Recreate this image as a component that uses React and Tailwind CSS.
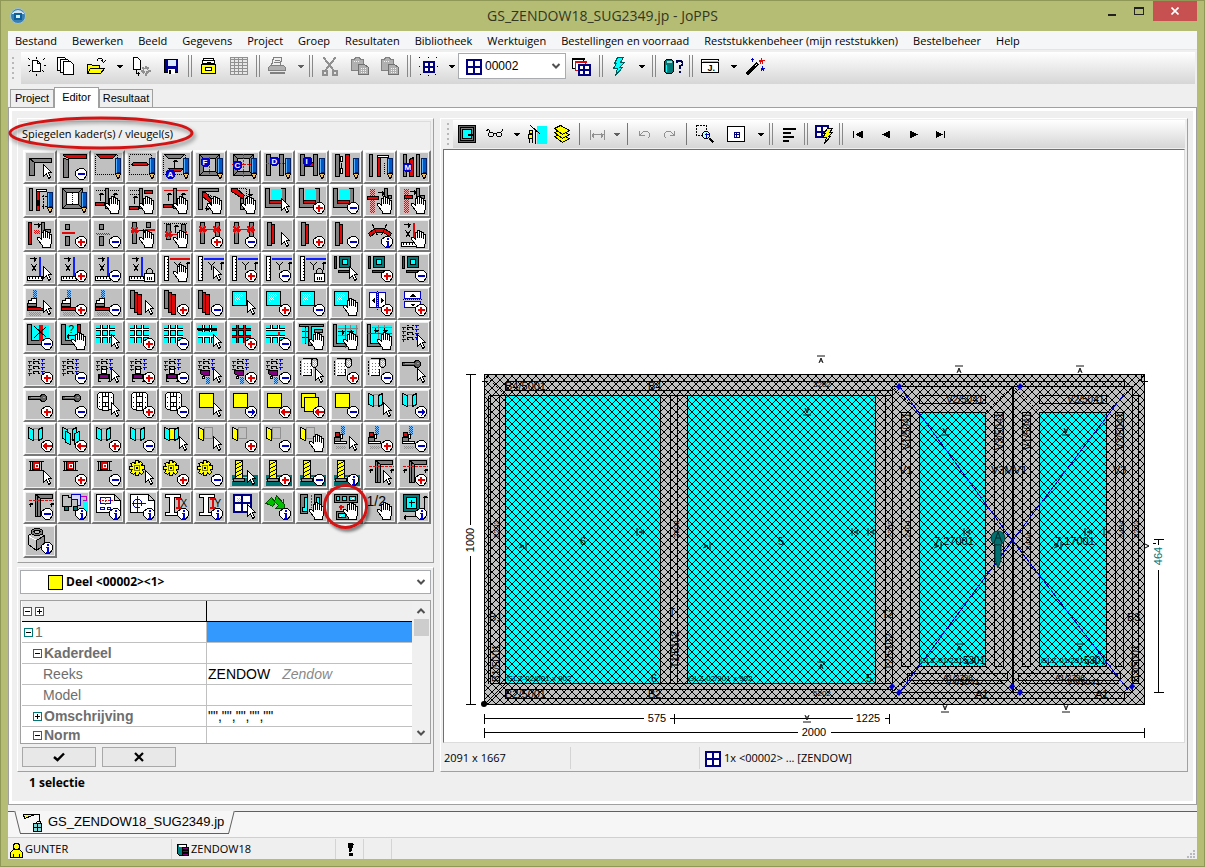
import React from 'react';

const K = '#000';
const W = '#fff';
const G = '#808080';
const R = '#e00808';
const C = '#00ffff';
const T = '#007878';
const B = '#0000c8';
const Y = '#ffff00';
const D = '#909090';

// Shape helpers: f = filled + outline, n = fill only, l = line, t = text
const f = (fill, d, stroke = K) => ({ fill, stroke, d });
const n = (fill, d) => ({ fill, stroke: 'none', d });
const l = (stroke, d, w = 1, dash) => ({ fill: 'none', stroke, d, w, dash });
const t = (fill, x, y, text, size = 10, weight = 'bold') => ({ fill, x, y, text, size, weight });

const Shapes = ({ list }) => (
  <g transform="translate(.5 .5)">
    {list.map((s, i) =>
      s.text ? (
        <text key={i} x={s.x} y={s.y} fill={s.fill} fontSize={s.size} fontWeight={s.weight} fontFamily="Liberation Sans, sans-serif">
          {s.text}
        </text>
      ) : (
        <path key={i} d={s.d} fill={s.fill} stroke={s.stroke} strokeWidth={s.w || 1} strokeDasharray={s.dash} shapeRendering="crispEdges" />
      )
    )}
  </g>
);

const Glyph = ({ list, size = 20, className = '' }) => (
  <svg viewBox={`0 0 ${size} ${size}`} width={size} height={size} className={`shrink-0 ${className}`} aria-hidden="true">
    <Shapes list={list} />
  </svg>
);

// Checkered fill as short runs of dots
const checker = (color, x, y, w, h) => {
  let d = '';
  for (let r = 0; r < h; r++) {
    for (let c = r % 2; c < w; c += 2) d += `M${x + c} ${y + r}h1v1h-1z`;
  }
  return n(color, d);
};

// Overlays in the lower right corner of a tool
const disc = f(W, 'M19 15H23L26 18V22L23 26H19L15 22V18Z');
const letterDisc = (x, y, c) => [
  n(B, `M${x - 2} ${y - 4}H${x + 3}L${x + 5} ${y - 2}V${y + 3}L${x + 3} ${y + 5}H${x - 2}L${x - 4} ${y + 3}V${y - 2}Z`),
  t(W, x - (c === 'I' ? 1 : 2), y + 3, c, 8),
];
const TOOLS = {
  cursor: [f(W, 'M17 11V23L20 20L22 25L24 24L22 19H25Z')],
  hand: [
    f(W, 'M16 26V24L11 18V16H13L15 18V11H17V9H19V10H21V11H23V13H25V21L24 24V26Z'),
    l(K, 'M17 11V16M19 10V16M21 11V16M23 13V17'),
  ],
  plus: [disc, l('#e00000', 'M17 20.5H24M20.5 17V24', 2)],
  minus: [disc, l(B, 'M17 20.5H24', 2)],
  right: [disc, l(B, 'M17 20.5H24', 2), n(B, 'M21 17L25 20.5L21 24Z')],
  left: [disc, l('#e00000', 'M18 20.5H25', 2), n('#e00000', 'M20 17L16 20.5L20 24Z')],
  info: [disc, n('#0000e0', 'M20 16H22V18H20ZM19 19H22V24H23V25H19V24H20V20H19Z')],
  pencil: [
    f('#0058c8', 'M21 5H26V19H21Z', '#002060'),
    l('#58b0ff', 'M22 5V19'),
    f('#f0c060', 'M21 20H26L24 25H23Z'),
    n(K, 'M22 23H26L24 26Z'),
  ],
  lock: [f(W, 'M16 18H26V26H16Z'), l(K, 'M18 18V15L20 13H22L24 15V18M19 21V24M21 21V24M23 21V24')],
};

const frameL = [f(G, 'M3 5H25V9H8V22H3Z'), l(K, 'M3 5L8 9')];
const redL = [f(G, 'M3 5L8 6V24H3Z'), f(R, 'M3 1H26V5H8L3 2Z')];
const dotBox = l(K, 'M1 1H23V21H1Z', 1, '1 1');
const postPair = [f(G, 'M2 1H6V22H2Z'), f(G, 'M15 1H19V22H15Z')];
const squareFrame = [f(G, 'M3 1H23V22H3Z'), f('#c0c0c0', 'M7 5H19V18H7Z'), l(K, 'M3 1L7 5M23 1L19 5M3 22L7 18M23 22L19 18')];
const up = (x, y) => l(K, `M${x} ${y}V${y + 8}M${x - 2} ${y + 2}H${x + 3}M${x - 1} ${y + 1}H${x + 2}`);
const toRight = (x, y) => l(K, `M${x} ${y}H${x + 7}M${x + 5} ${y - 2}V${y + 3}M${x + 6} ${y - 1}V${y + 2}`);
const cross = (x, y) => l(R, `M${x - 3} ${y - 3}L${x + 3} ${y + 3}M${x + 3} ${y - 3}L${x - 3} ${y + 3}M${x - 4} ${y}H${x + 4}`, 2);
const glazed = [
  f(G, 'M1 1H5V16H17V1H21V20H1Z'),
  n(C, 'M6 1H17V12H6Z'),
  f(R, 'M5 13H17V16H5Z'),
];
const hatchPost = [n('#f0b0b0', 'M3 1H8V25H3Z'), checker(R, 3, 1, 5, 24)];
const splitPost = [f(G, 'M5 3H9V8H5Z'), f(G, 'M5 15H9V24H5Z')];
const twinRed = [f(G, 'M4 1H8V22H4Z'), f(G, 'M19 1H23V22H19Z'), l(R, 'M5 8H22'), cross(6, 8), cross(20, 8)];
const redBar = [f(G, 'M3 1H7V24H3Z'), f(R, 'M7 3H10V22H7Z')];
const ruler = [f(W, 'M1 21H16V25H1Z'), l(K, 'M3 21V23M6 21V23M9 21V23M12 21V23M15 21V23')];
const rulerX = [toRight(3, 3), l(K, 'M5 9L10 16M10 9L5 16'), ...ruler, l('#1020ff', 'M13.5 1V20', 2)];
const rulerY = (c) => [
  f(W, 'M2 1H6V25H2Z'),
  l(K, 'M4 4H6M4 7H6M4 10H6M4 13H6M4 16H6M4 19H6M4 22H6'),
  l(c, 'M7 3.5H27', 2),
  l(K, 'M12 7L15 10L18 7M15 10V14'),
  up(25, 6),
];
const sash = [
  f(R, 'M2 1H4V13H2Z'),
  f(T, 'M7 1H18V12H7Z'),
  f(C, 'M10 4H15V9H10Z'),
  f(R, 'M6 15H18V17H6Z'),
];
const clamp = [
  n('#80c0ff', 'M6 0H10V11H6Z'),
  checker('#0050e0', 6, 0, 4, 11),
  f(W, 'M2 11H5V9H10V14H2Z'),
  f(G, 'M1 14H10V17H1Z'),
  f(R, 'M1 18H10L19 19V21H1Z'),
  checker(D, 2, 22, 12, 4),
];
const leaves = [f(G, 'M2 1H6V19H2Z'), f(R, 'M6 3H9V23H6Z'), f(R, 'M9 5H13V25H9Z')];
const pane = [f(C, 'M2 2H16V16H2Z'), checker(W, 4, 4, 8, 3), checker(W, 4, 7, 5, 3), checker(W, 4, 10, 2, 2)];
const doorsV = [f(W, 'M3 3H10V18H3Z', B), f(W, 'M12 3H19V18H12Z', B), l(K, 'M11 1V20', 1, '1 1'), n(K, 'M8 8V14L5 11ZM14 8V14L17 11Z')];
const doorsH = [f(W, 'M4 2H20V9H4Z', B), f(W, 'M4 12H20V18H4Z', B), l(K, 'M2 10H22', 1, '1 1'), n(K, 'M9 7H15L12 4ZM9 14H15L12 17Z')];
const tiles = (v, redRow) => [
  n(C, 'M1 1H20V19H1Z'),
  l(K, 'M1 6H20M1 13H20M7 1V19M14 1V19', 3),
  l(redRow || W, 'M1 6H20M1 13H20'),
  l(v, 'M7 1V19M14 1V19'),
];
const springs = [
  l('#0000ff', 'M1 4H5M1 8H5M1 12H5M1 16H5M14 2H18M14 6H18M14 10H18M14 14H18'),
  l('#0000ff', 'M3 3V6M3 7V10M3 11V14M3 15V18M16 1V4M16 5V8M16 9V12M16 13V16'),
  l(K, 'M6 2H8M11 2H13M7 4H12M6 6H8M11 6H13M7 9H12M6 11H8M11 11H13M7 14H12M6 16H8M11 16H13'),
  l(K, 'M7 3V6M12 3V6M7 8V11M12 8V11M7 13V16M12 13V16'),
];
const springBox = [...springs, n('#c0c0c0', 'M0 13H20V20H0Z'), f(W, 'M7 12H12V16H7Z'), f('#800080', 'M5 17H14V21H5Z'), l(K, 'M4 16V24M15 16V24M3 24H6M13 24H16')];
const springDrip = [...springs, n('#c0c0c0', 'M0 12H20V20H0Z'), f('#800080', 'M4 13H13V18H7L4 16Z'), n('#80c0ff', 'M9 19H13V26H9Z'), checker('#0050e0', 9, 19, 4, 7), f(W, 'M6 19H8V21H6Z')];
const roll = [
  n(W, 'M3 2H14V18H3Z'),
  l(K, 'M2 3V17', 1, '2 1'),
  l(K, 'M4 1H15M4 18H13M13 11V17'),
  l('#707070', 'M5 6H12M5 9H12M5 12H12M5 15H12', 1, '1 2'),
  f('#b0b0b0', 'M14 1H18L19 3V8L17 10H15L13 8V3Z'),
  checker(W, 14, 3, 4, 5),
];
const lever = [f('#606060', 'M2 5H14L15 3H18L20 5V8L18 10H15L14 8H2Z'), l('#a0a0a0', 'M4 6H13M16 6H18')];
const hinge = [f(W, 'M3 3L5 1H8V18H5L3 16Z'), f(W, 'M14 1H17L19 3V16L17 18H14Z'), f(W, 'M8 1H14V19H8Z'), l(K, 'M8 5H14M8 11H14M8 15H14M11 1V5M11 11V15M5 5V6M5 10V11M5 14V15M17 5V6M17 10V11M17 14V15')];
const yellow = [f(Y, 'M3 2H17V16H3Z')];
const twoYellow = [f(Y, 'M3 2H17V16H3Z'), f(Y, 'M6 6H20V20H6Z')];
const book = (mid) => [f(mid, 'M7 3H12V14H7Z', mid === Y ? K : D), f(C, 'M2 2L7 4V15L2 13Z'), f(C, 'M16 2L12 4V15L16 13Z')];
const yellowDoor = [l(D, 'M8 2H16V13H8Z'), f(Y, 'M2 2L7 4V15L2 13Z')];
const redClamp = [n('#80c0ff', 'M8 0H12V9H8Z'), checker('#0050e0', 8, 0, 4, 9), f(R, 'M3 7H7V11H3Z'), f(W, 'M8 9H10V13H8Z'), f(G, 'M2 12H8V16H2Z'), f(W, 'M2 16H14V18H2Z'), checker(D, 3, 20, 10, 3)];
const redNut = [l(K, 'M2 2H17M2 11H17M4 2V11M15 2V11'), f(R, 'M6 2H13V10H6Z'), n(W, 'M8 4H12V8H8Z'), n(R, 'M9 5H11V7H9Z')];
const gear = [
  f(Y, 'M7 1H10V3L12 2L14 4L13 6H16V10H14L15 13L13 15L11 13L10 16H7V13L5 15L2 13L4 10H1V7H4L2 4L5 3L7 4Z'),
  l('#808000', 'M6 6H11V11H6Z'),
  f(W, 'M8 8H9V9H8Z'),
];
const screw = [
  n('#007070', 'M1 15H27V26H1Z'),
  l('#c0c0c0', 'M1 22L5 18H17'),
  f(D, 'M3 19H14V22H3Z'),
  f(Y, 'M5 1H12V19H5Z'),
  l(K, 'M5 5L12 2M5 9L12 6M5 13L12 10M5 17L12 14'),
];
const cornerRed = [f(G, 'M9 1H26V5H14V23H9Z'), l(K, 'M9 1L14 5M11 3V23'), l(R, 'M2 7H27', 1, '3 1'), l(K, 'M4 9V13M2 11H6M3 10H6M25 9V13M23 11H27M24 10H27')];
const iBeam = (c) => [f(W, 'M3 1H18V4H12V19H18V22H3V19H7V4H3Z'), l(R, 'M13 5H19M16 5V14M13 14H19', 2), t(K, 18, 13, c, 10, 'normal')];

const GRID = [
  // row 1
  [frameL, 'cursor'],
  [redL, 'minus'],
  [[dotBox, f(R, 'M2 1H22L18 5H6Z')], 'pencil'],
  [[dotBox, f(R, 'M5 9H18L20 11L18 12H5L3 11Z')], 'pencil'],
  [[dotBox, f(G, 'M2 1H22L18 5H6Z'), up(12, 6), f(R, 'M6 15H21L18 18H9Z'), ...letterDisc(7, 20, 'A')], 'pencil'],
  [[...squareFrame, l(R, 'M13 3V21', 1, '2 1'), ...letterDisc(8, 8, 'F')], 'pencil'],
  [[...squareFrame, l(R, 'M13 0V24M1 11H22', 1, '2 1'), ...letterDisc(6, 11, 'C')], 'pencil'],
  [[...postPair, l(R, 'M1 10H22', 1, '1 1'), ...letterDisc(9, 7, 'D')], 'pencil'],
  [[...postPair, f(R, 'M6 9H15V13H6Z'), ...letterDisc(8, 7, 'I')], 'pencil'],
  [[f(G, 'M3 1H7V23H3Z'), f(W, 'M8 3H10V8H8Z'), f(W, 'M8 15H10V20H8Z'), l(K, 'M9 9V14'), f(R, 'M13 1H17V23H13Z')], 'pencil'],
  [[f(G, 'M3 1H6V23H3Z'), f(R, 'M11 3H14V23H11Z'), f(W, 'M11 2H22V4H11Z'), l(K, 'M18 9V21', 1, '1 1')], 'pencil'],
  [[f(G, 'M3 1H6V23H3Z'), f(G, 'M16 1H19V23H16Z'), f(R, 'M9 6L13 4V23H9Z'), ...letterDisc(6, 13, 'M')], 'pencil'],
  // row 2
  [[f(G, 'M3 1H6V23H3Z'), f(R, 'M10 3H13V23H10Z'), f(W, 'M10 2H20V4H10Z'), f(W, 'M11 13H12V18H11Z'), l(K, 'M17 7V21M15 9H20M15 19H20', 1, '2 1')], 'pencil'],
  [[f(G, 'M2 1H22V21H2Z'), f(W, 'M6 5H18V17H6Z'), l(K, 'M2 1L6 5M22 1L18 5M2 21L6 17M22 21L18 17'), l(B, 'M12 5V17', 1, '1 1')], 'pencil'],
  [[l(K, 'M1 3H25', 1, '1 1'), up(6, 5), f(G, 'M11 1H14V21H11Z'), f(R, 'M1 15H10V18H1Z'), up(20, 5)], 'hand'],
  [[l(K, 'M1 3H11M1 7H11', 1, '1 1'), up(6, 8), f(G, 'M11 1H14V21H11Z'), f(R, 'M16 3H24V6H16Z'), f(R, 'M1 19H10V22H1Z')], 'hand'],
  [[l(R, 'M1 3H25'), up(6, 5), f(G, 'M11 1H14V21H11Z'), f(R, 'M1 17H10V20H1Z'), up(20, 5)], 'hand'],
  [[f(G, 'M2 1H22V4H6V22H2Z'), l(K, 'M8 5L20 12', 1, '1 1'), f(R, 'M6 5L9 5L20 17L16 17L6 9Z'), l(K, 'M10 18V23M8 21H13M9 22H12')], 'hand'],
  [[l(K, 'M6 1H16V10', 1, '1 1'), f(G, 'M10 11H13V22H10Z'), f(R, 'M1 1H6L14 8L12 11L1 4Z'), l(K, 'M19 1V9M17 7H22M18 8H21')], 'hand'],
  [glazed, 'cursor'],
  [glazed, 'plus'],
  [glazed, 'minus'],
  [[...hatchPost, f(R, 'M1 9H12V12H1Z'), toRight(11, 5), f(G, 'M18 1H21V20H18Z'), f(G, 'M22 8H25V11H22Z')], 'hand'],
  [[...hatchPost, f(R, 'M4 8H12V11H4Z'), toRight(9, 4), f(G, 'M16 1H19V20H16Z'), f(G, 'M20 8H24V11H20Z')], 'hand'],
  // row 3
  [[f(R, 'M2 1H5V23H2Z'), toRight(7, 3), checker(R, 7, 8, 6, 4), f(G, 'M15 1H18V20H15Z'), f(G, 'M19 8H24V11H19Z')], 'hand'],
  [[...splitPost, l(R, 'M1 11.5H14', 2)], 'plus'],
  [[...splitPost, checker(R, 1, 11, 14, 2)], 'minus'],
  [[f(G, 'M4 1H8V22H4Z'), cross(6, 9), toRight(10, 9), f(G, 'M18 1H22V6H18Z'), l(R, 'M16 8.5H26', 2)], 'hand'],
  [[f(G, 'M4 3H8V18H4Z'), f(G, 'M19 3H23V18H19Z'), up(13, 3), l(K, 'M1 2H25', 1, '1 1'), l(R, 'M5 13H22'), cross(6, 13), cross(21, 13)], 'hand'],
  [twinRed, 'plus'],
  [twinRed, 'minus'],
  [redBar, 'cursor'],
  [redBar, 'plus'],
  [redBar, 'minus'],
  [[f(R, 'M2 12L8 7H18L25 12L23 15L17 11H9L4 15Z'), l(K, 'M6 3L11 14M20 3L15 14')], 'info'],
  [[toRight(3, 3), l(K, 'M5 9L10 16M10 9L5 16'), ...ruler, l(R, 'M13.5 1V18', 2)], 'hand'],
  // row 4
  [rulerX, 'cursor'],
  [rulerX, 'plus'],
  [rulerX, 'minus'],
  [rulerX, 'lock'],
  [rulerY(R), 'hand'],
  [rulerY('#1020ff'), 'cursor'],
  [rulerY('#1020ff'), 'plus'],
  [rulerY('#1020ff'), 'minus'],
  [rulerY('#1020ff'), 'lock'],
  [sash, 'cursor'],
  [sash, 'plus'],
  [sash, 'minus'],
  // row 5
  [clamp, 'cursor'],
  [clamp, 'plus'],
  [clamp, 'minus'],
  [leaves, 'cursor'],
  [leaves, 'plus'],
  [leaves, 'minus'],
  [pane, 'cursor'],
  [pane, 'plus'],
  [pane, 'minus'],
  [pane, 'hand'],
  [doorsV, 'plus'],
  [doorsH, 'plus'],
  // row 6
  [[n(C, 'M5 1H22V17H5Z'), f(G, 'M1 1H5V17H20V21H1Z'), n(R, 'M12 1H16V17H12Z'), l(K, 'M8 3L20 14M20 3L8 14')], 'minus'],
  [[n(C, 'M5 1H17V17H5Z'), f(G, 'M1 1H5V17H14V21H1Z'), f(R, 'M17 1H20V12H17Z'), t(K, 8, 9, '?', 10, 'normal'), l(K, 'M6 12H15M8 10V15M7 11V14')], 'hand'],
  [tiles(W), 'cursor'],
  [tiles(W), 'plus'],
  [tiles(W), 'minus'],
  [[...tiles(W), n(C, 'M1 8H20V12H1Z'), f(R, 'M1 5H20V6H1Z')], 'cursor'],
  [tiles(R, R), 'plus'],
  [[n(C, 'M1 1H20V19H1Z'), l(K, 'M1 6H20M1 13H20', 3), l(W, 'M1 6H20M1 13H20'), l(K, 'M7 1V5M14 1V5M7 14V19M14 14V19', 3), l(W, 'M7 1V6M14 1V6M7 13V19M14 13V19'), l(R, 'M14.5 8V12', 2)], 'minus'],
  [[n(C, 'M3 3H22V20H3Z'), l(K, 'M3 8H10M3 14H10M7 3V20'), f(G, 'M1 1H25V3H13V22H10V3H1Z'), l(R, 'M7 4V19'), f(G, 'M16 6H24V9H16Z')], 'hand'],
  [[n(C, 'M5 1H25V20H5Z'), l(G, 'M5 5H25M5 12H25M18 1V20M24 1V20'), f(G, 'M1 1H4V20H20V23H1Z'), l(R, 'M13 1V24'), toRight(5, 8), toRight(14, 8)], 'hand'],
  [[n(C, 'M5 1H25V20H5Z'), l(G, 'M5 4H25M12 1V20M18 1V20'), f(G, 'M1 1H4V20H20V23H1Z'), l(R, 'M0 10H25'), l(K, 'M9 4V9M7 7H12M8 8H11M18 4V9M16 7H21M17 8H20')], 'hand'],
  [springs, 'cursor'],
  // row 7
  [springs, 'plus'],
  [springs, 'minus'],
  [springBox, 'cursor'],
  [springBox, 'plus'],
  [springBox, 'minus'],
  [springDrip, 'cursor'],
  [springDrip, 'plus'],
  [springDrip, 'minus'],
  [roll, 'cursor'],
  [roll, 'plus'],
  [roll, 'minus'],
  [lever, 'cursor'],
  // row 8
  [lever, 'plus'],
  [lever, 'minus'],
  [hinge, 'cursor'],
  [hinge, 'plus'],
  [hinge, 'minus'],
  [yellow, 'cursor'],
  [yellow, 'right'],
  [yellow, 'left'],
  [twoYellow, 'left'],
  [yellow, 'minus'],
  [book('#c0c0c0'), 'cursor'],
  [book('#c0c0c0'), 'right'],
  // row 9
  [book('#c0c0c0'), 'left'],
  [[...book('#c0c0c0'), f(C, 'M5 6L10 8V19L5 17Z'), f(C, 'M19 6L14 8V19L19 17Z')], 'left'],
  [book('#c0c0c0'), 'plus'],
  [book('#c0c0c0'), 'minus'],
  [book(Y), 'cursor'],
  [yellowDoor, 'cursor'],
  [yellowDoor, 'plus'],
  [yellowDoor, 'minus'],
  [yellowDoor, 'hand'],
  [redClamp, 'cursor'],
  [redClamp, 'plus'],
  [redClamp, 'minus'],
  // row 10
  [redNut, 'cursor'],
  [redNut, 'plus'],
  [redNut, 'minus'],
  [gear, 'cursor'],
  [gear, 'plus'],
  [gear, 'minus'],
  [screw, 'cursor'],
  [screw, 'plus'],
  [screw, 'minus'],
  [screw, 'info'],
  [cornerRed, 'cursor'],
  [cornerRed, 'plus'],
  // row 11
  [cornerRed, 'minus'],
  [[n(C, 'M22 6H27V18H22Z'), f('#c0c0c0', 'M2 2H8V4H11V13H2Z'), f(T, 'M4 13H8V17H4Z'), f('#d8d8ff', 'M11 1H20V12H17V6H11Z', B), l('#c000c0', 'M20 3H26V7H22'), f(T, 'M13 13H17V17H13Z')], 'info'],
  [[f(W, 'M2 1H20L26 7V19H2Z'), f('#d0d0d0', 'M20 1V7H26Z'), l(B, 'M6 4H16V10H6ZM6 14H10V16H6ZM13 14H16V16H13Z'), l(R, 'M11 3V11M4 7H18', 1, '2 1')], 'info'],
  [[f(W, 'M2 1H20L26 7V19H2Z'), f('#d0d0d0', 'M20 1V7H26Z'), l(B, 'M9 2V18M3 10H17M6 7L9 5L12 7L14 10L12 13L9 15L6 13L4 10Z')], 'info'],
  [iBeam('X'), 'info'],
  [iBeam('Y'), 'info'],
  [[n(W, 'M3 1H19V18H3Z'), l('#000080', 'M3 1H20V18H3ZM11.5 1V18M3 9.5H20', 2), checker('#c0c0c0', 6, 4, 4, 4)], 'cursor'],
  [[f('#00c000', 'M1 10L7 4L10 8L12 2L19 10V6L20 15H11L14 12L11 9L8 13L5 11Z', '#005000')], 'info'],
  [[f(G, 'M2 1H9V7H6V18H9V20H2Z'), f(C, 'M6 4H9V18H4V14H6Z'), l(R, 'M13 1V14', 1, '2 1'), f(G, 'M16 1H23V14H16Z'), f(C, 'M18 4H21V12H18Z')], 'hand'],
  [[f(G, 'M2 1H25V9H2Z'), f(C, 'M4 3H7V7H4ZM10 3H14V7H10ZM17 3H23V7H17Z'), l(W, 'M19 6L22 4'), l(R, 'M6 13H11M8.5 11V16', 2), f(G, 'M4 18H17V26H4Z'), f(C, 'M6 20H13V24H6Z'), l(W, 'M8 23L11 21')], 'hand'],
  [[t(K, 0, 12, '1/2', 14, 'normal')], 'hand'],
  [[f(T, 'M3 1H19V18H3Z'), f(C, 'M6 4H16V15H6Z'), l(K, 'M11 6V13M8 9H14M24 2V15M22 4H27M23 3H26M3 23H15M5 21V26M4 22V25')], 'info'],
  // row 12
  [[f('#c8c8c8', 'M2 8L9 4L18 8V17L10 23L2 17Z'), f('#909090', 'M10 13L18 8V17L10 23Z'), l(W, 'M3 9L10 13'), f('#808080', 'M5 3L8 1H13L16 3V6L13 8H8L5 6Z'), f('#c0c0c0', 'M7 4L9 3H12L14 4L12 6H9Z')], 'info'],
];

const win = (c = '#000080') => [n(W, 'M3 3H16V16H3Z'), l(c, 'M3 3H17V17H3ZM10 3V17M3 10H17', 2)];
const rays = l(K, 'M10 0V1M10 18V20M0 10H1M18 10H20M1 1L2 2M18 1L17 2M1 19L2 18M18 19L17 18');
const smallWin = [n(W, 'M5 5H14V14H5Z'), l('#000080', 'M5 5H15V15H5ZM10 5V15M5 10H15', 2)];
const caret = [n(K, 'M6 8H14L10 12Z')];
const caretOff = [n('#606060', 'M6 8H14L10 12Z')];
const page = (x, y) => f(W, `M${x} ${y}H${x + 7}L${x + 10} ${y + 3}V${y + 13}H${x}Z`);
const clip = [f('#b0b0b0', 'M1 3H4L5 1H9L10 3H13V14H1Z', '#808080'), f('#b0b0b0', 'M8 8H14L18 11V18H8Z', '#707070'), l('#f4f4f4', 'M10 12H15M10 14H16M10 16H16M3 5H9', 1, '1 1')];
const bolt = (c, s) => f(c, 'M8 1H14L11 6H15L10 11H13L6 19L8 12H4L7 7H5Z', s);

const MAIN_BAR = [
  ['w-[30px]', 'Nieuw', [f(W, 'M6 4H11L14 7V15H6Z'), l(K, 'M11 4V7H14'), l(K, 'M10 0V2M1 9H3M17 9H20M2 2L4 4M16 4L18 2M2 16L4 14M16 14L18 16M10 17V19')]],
  ['w-[29px]', 'Pagina’s', [page(1, 1), page(4, 3), page(7, 5)]],
  ['w-[32px]', 'Openen', [f(Y, 'M1 8H5L6 9H13V17H1Z'), f(Y, 'M4 12H18L14 17H1Z'), l(K, 'M10 5L12 2H15L17 5M15 4L17 6L19 4')]],
  ['w-[14px]', 'Openen menu', caret],
  ['w-[30px]', 'Importeren', [f(W, 'M2 1H6L9 4V13H2Z'), l(K, 'M5 13V17H8M7 15V19'), l(D, 'M14 9V12M14 16V19M9 14H12M16 14H19M11 11L13 13M17 11L15 13M11 17L13 15M17 17L15 15', 2)]],
  ['w-[30px]', 'Opslaan', [f('#000090', 'M3 3H16V16H3Z'), n('#d8e8ff', 'M6 3H14V9H6Z'), n(W, 'M6 12H13V17H6Z'), n(K, 'M7 13H9V17H7Z')]],
  ['w-2', '|'],
  ['w-[30px]', 'Archief', [f(W, 'M4 2H14V5H4Z'), f(W, 'M3 4H15V7H3Z'), f(Y, 'M2 8H16V17H2Z'), f(W, 'M6 11H12V14H6Z'), l(K, 'M7 6H11')]],
  ['w-[30px]', 'Tabel', [f('#e8e8e8', 'M1 1H18V18H1Z', D), l(D, 'M1 3H18M1 6H18M1 9H18M1 12H18M1 15H18M5 1V18M9 1V18M13 1V18')]],
  ['w-2', '|'],
  ['w-[30px]', 'Afdrukken', [f('#f0f0f0', 'M6 1H14L13 9H4Z', G), f('#b0b0b0', 'M3 9H16L18 11V14H1V11Z', G), l(G, 'M7 4H12M6 6H12'), l(G, 'M2 16.5H17', 2)]],
  ['w-[15px]', 'Afdrukken menu', caretOff],
  ['w-2', '|'],
  ['w-[30px]', 'Knippen', [l(D, 'M3 1L14 15M15 1L4 15', 2), l(D, 'M2 14H6V18H2ZM12 14H16V18H12Z', 2)]],
  ['w-[30px]', 'Kopiëren', clip],
  ['w-[30px]', 'Plakken', clip],
  ['w-2', '|'],
  ['w-[30px]', 'Nieuw raam', [...smallWin, rays]],
  ['w-[15px]', 'Nieuw raam menu', caret],
  ['combo'],
  ['w-[30px]', 'Ramen', [f(W, 'M1 2H12V12H1Z'), l(K, 'M1 2.5H13', 2), f(W, 'M4 5H14V14H4Z', R), l(R, 'M4 5.5H15', 2), n(W, 'M7 8H18V18H7Z'), l('#000080', 'M7 8H18V18H7ZM12.5 8V18M7 13H18', 2)]],
  ['w-[9px]', '|'],
  ['w-[27px]', 'Berekenen', [bolt(C, '#005858')]],
  ['w-[18px]', 'Berekenen menu', caret],
  ['w-2', '|'],
  ['w-[29px]', 'Database', [f(T, 'M1 5L3 3H8L10 5V15L8 17H3L1 15Z'), n('#a0d0d0', 'M3 4H8V6H3Z'), l(C, 'M3 8V15'), l('#000050', 'M13 6V4H15L17 4L19 6V8L16 10V12M16 14V16', 2)]],
  ['w-2', '|'],
  ['w-[30px]', 'Venster', [f(W, 'M1 3H18V16H1Z'), n(C, 'M2 4H18V6H2Z'), l(K, 'M1 6H18'), t(K, 7, 14, 'J.', 9)]],
  ['w-[15px]', 'Venster menu', caret],
  ['w-[30px]', 'Wizard', [l(K, 'M1 18L12 7', 3), l(W, 'M9 10L11 8'), n(B, 'M5 2H6V1H7V2H8V3H7V5H6V3H5Z'), n(R, 'M13 3H15V1H16V3H19V4H17V7H16V5H15V7H14V5H13Z'), n(B, 'M15 11H16V9H17V11H19V12H18V14H17V13H16V14H15Z')]],
];

const VIEW_BAR = [
  ['w-[27px]', 'Kader', [f('#606060', 'M1 1H18V18H1Z'), f(G, 'M3 3H16V16H3Z'), f(C, 'M5 5H14V14H5Z'), n(K, 'M10 9H15V11H10Z')]],
  ['w-[29px]', 'Bril', [l(K, 'M1 6L3 5L5 8M17 5L18 6M16 8L17 5M4 8H7L8 9V11L7 12H4L3 11V9ZM12 8H15L16 9V11L15 12H12L11 11V9ZM8 9H11')]],
  ['w-[14px]', 'Bril menu', caret],
  ['w-[27px]', 'Persoon', [n(C, 'M9 1H19V19H9Z'), l(K, 'M3 1L13 10M8 4V19'), f(Y, 'M2 6H5V9H2Z'), f(Y, 'M1 10H5V14H1Z'), l(K, 'M2 14V18M5 14V18')]],
  ['w-6', 'Lagen', [f(Y, 'M2 12L8 10L17 14L10 18Z'), f(Y, 'M2 8L8 6L17 10L10 14Z'), f(Y, 'M2 4L8 1L17 6L10 10Z')]],
  ['w-[11px]', '|1'],
  ['w-6', 'Maat', [l(D, 'M3 5V15M17 5V15M4 10H16M6 8V13M14 8V13M5 9V12M15 9V12')]],
  ['w-[14px]', 'Maat menu', caretOff],
  ['w-2', '|1'],
  ['w-[25px]', 'Ongedaan maken', [l(D, 'M5 6V11H10M5 11L9 7H13L15 9V12L13 14')]],
  ['w-[26px]', 'Opnieuw', [l(D, 'M15 6V11H10M15 11L11 7H7L5 9V12L7 14')]],
  ['w-2', '|1'],
  ['w-[29px]', 'Zoomen', [l(K, 'M1 1H11V11H1Z', 1, '2 1'), f('#c0ffff', 'M9 7H12L14 9V12L12 14H9L7 12V9Z'), l(K, 'M14 14L18 18', 2), l(B, 'M9 10H13M11 8V13')]],
  ['w-[34px]', 'Passend', [f(W, 'M1 2H18V17H1Z'), n('#000080', 'M7 7H13V13H7Z'), n(W, 'M8 8H9V9H8ZM10 8H12V9H10ZM8 10H9V12H8ZM10 10H12V12H10Z')]],
  ['w-[14px]', 'Passend menu', caret],
  ['w-2', '|'],
  ['w-[27px]', 'Uitlijnen', [l(K, 'M3 4.5H16M3 8.5H11M3 12.5H14M3 16.5H9', 2)]],
  ['w-2', '|'],
  ['w-[27px]', 'Raam berekenen', [n(W, 'M1 1H12V12H1Z'), l('#000080', 'M1 1H13V12H1ZM7 1V12M1 7H12', 2), f(Y, 'M13 4H18L15 8H18L14 12H16L10 19L12 13H8L11 9H9Z')]],
  ['w-2', '|'],
  ['w-[26px]', 'Eerste', [l(K, 'M5 6V13'), n(K, 'M14 6V14L7 10Z')]],
  ['w-[28px]', 'Vorige', [n(K, 'M14 6V14L6 10Z')]],
  ['w-[27px]', 'Volgende', [n(K, 'M6 6V14L14 10Z')]],
  ['w-[27px]', 'Laatste', [n(K, 'M5 6V14L12 10Z'), l(K, 'M14 6V13')]],
];

const ToolBar = ({ items }) => (
  <>
    {items.map(([w, label, list], i) => {
      if (w === 'combo') {
        return (
          <div key={i} className="relative flex h-[26px] w-[108px] items-center border border-[#a8acb0] bg-white">
            <Glyph list={win()} className="ml-1" />
            <select aria-label="Positie" className="h-full flex-1 appearance-none bg-transparent pl-0.5 font-['Liberation_Sans',sans-serif] text-[12px] text-black outline-none">
              <option>00002</option>
            </select>
            <Chevron className="absolute right-1" />
          </div>
        );
      }
      if (label === '|') {
        return (
          <span key={i} className={`flex h-[22px] shrink-0 justify-center gap-0.5 ${w}`}>
            <i className="w-px bg-[#888]" />
            <i className="w-px bg-[#888]" />
          </span>
        );
      }
      if (label === '|1') {
        return (
          <span key={i} className={`flex h-[22px] shrink-0 justify-center ${w}`}>
            <i className="w-px bg-[#777]" />
          </span>
        );
      }
      return (
        <button key={i} type="button" aria-label={label} className={`flex h-6 shrink-0 items-center justify-center ${w}`}>
          <Glyph list={list} />
        </button>
      );
    })}
  </>
);

const Chevron = ({ className = '', up: isUp }) => (
  <svg viewBox="0 0 10 8" width="10" height="8" className={`pointer-events-none ${className}`} aria-hidden="true">
    <path d={isUp ? 'M1.5 6L5 2.5L8.5 6' : 'M1.5 2L5 5.5L8.5 2'} fill="none" stroke="#505050" strokeWidth="2" />
  </svg>
);

const Grip = () => (
  <span className="mx-1 flex flex-col gap-[3px]">
    {[0, 1, 2, 3, 4].map((i) => (
      <i key={i} className="h-0.5 w-0.5 bg-[#b8b8b8]" />
    ))}
  </span>
);

const MENU = ['Bestand', 'Bewerken', 'Beeld', 'Gegevens', 'Project', 'Groep', 'Resultaten', 'Bibliotheek', 'Werktuigen', 'Bestellingen en voorraad', 'Reststukkenbeheer (mijn reststukken)', 'Bestelbeheer', 'Help'];

const Expander = ({ open }) => (
  <button type="button" aria-label={open ? 'Inklappen' : 'Uitklappen'} className="mt-px block h-[9px] w-[9px] shrink-0">
    <svg viewBox="0 0 9 9" width="9" height="9" className="block">
      <rect x=".5" y=".5" width="8" height="8" fill="#fff" stroke="#007878" />
      <path d={open ? 'M2 4.5H7' : 'M2 4.5H7M4.5 2V7'} stroke="#000" />
    </svg>
  </button>
);

const PROPS = [
  { label: '1', open: true, pad: 'pl-0.5', selected: true },
  { label: 'Kaderdeel', open: true, pad: 'pl-[11px]', bold: true },
  { label: 'Reeks', pad: 'pl-[21px]', value: 'ZENDOW', note: 'Zendow' },
  { label: 'Model', pad: 'pl-[21px]' },
  { label: 'Omschrijving', open: false, pad: 'pl-[11px]', bold: true, value: '"","","","",""' },
  { label: 'Norm', open: true, pad: 'pl-[11px]', bold: true },
];

const PropertyList = () => (
  <div className="flex h-[144px] border border-[#a0a0a0] bg-white pl-px">
    <div className="min-w-0 flex-1 overflow-hidden">
      <table className="w-full table-fixed border-separate border-spacing-0 font-['Liberation_Sans',sans-serif] text-[14px] leading-[14px] text-[#6e6e6e]">
        <thead>
          <tr className="h-[21px]">
            <th className="w-[185px] border-b border-r border-black bg-[#efefef] p-0">
              <span className="flex gap-[3px] pl-px">
                <Expander open />
                <Expander />
              </span>
            </th>
            <th className="border-b border-black bg-[#efefef] p-0" />
          </tr>
        </thead>
        <tbody>
          {PROPS.map((p, i) => (
            <tr key={p.label} className={i === PROPS.length - 1 ? 'h-[17px]' : 'h-[21px]'}>
              <td className="border-b border-r border-[#c0c0c0] p-0">
                <span className={`flex items-center gap-0.5 ${p.pad} ${p.bold ? 'font-bold' : ''}`}>
                  {p.open !== undefined && <Expander open={p.open} />}
                  {p.label}
                </span>
              </td>
              <td className={`whitespace-pre border-b border-[#c0c0c0] p-0 pl-px ${p.selected ? 'bg-[#3399ff]' : ''}`}>
                <span className="text-black">{p.value}</span>
                {p.note && <em className="ml-3 text-[#888]">{p.note}</em>}
              </td>
            </tr>
          ))}
        </tbody>
      </table>
    </div>
    <div className="flex w-[18px] flex-col items-center bg-[#f0f0f0] py-[6px]">
      <Chevron up />
      <div className="mt-1 h-[17px] w-[15px] bg-[#cdcdcd]" />
      <Chevron className="mt-auto" />
    </div>
  </div>
);

const HATCH = Array.from({ length: 8 }, (_, i) => `M${i} ${i}h1v1h-1zM${7 - i} ${i}h1v1h-1z`).join('');

const box = (x1, y1, x2, y2) => `M${x1} ${y1}H${x2}V${y2}H${x1}Z`;

const PANES = [
  [505, 395, 660, 683],
  [687, 395, 875, 683],
  [919, 412, 985, 666],
  [1039, 412, 1106, 666],
];

const FRAME_LINES = [
  box(484, 374, 1144, 704),
  'M505 381H1124V386M505 381V390H892M488 395H505M505 689H892M505 698H1124V692M505 689V698',
  'M490 395V683M499 395V683M505 395V683M490 683H505M488 395V683',
  'M670 395V683M677 395V683M885 395V683M892 386V692',
  'M660 395H687M660 683H687M875 395H892M875 683H892',
  box(892, 386, 1012, 692),
  box(1013, 386, 1132, 692),
  box(919, 395, 985, 403),
  box(1039, 395, 1106, 403),
  box(901, 412, 910, 666),
  box(994, 412, 1003, 666),
  box(1022, 412, 1030, 666),
  box(1115, 412, 1123, 666),
  box(907, 673, 1007, 680),
  box(1018, 673, 1120, 680),
  'M910 683H1002M1022 683H1118M1132 395H1138V683H1132',
  'M484 704L505 683',
];

const MITRES = [
  'M892 386L919 412M1012 386L985 412M1013 386L1039 412M1132 386L1106 412',
  'M892 692L919 666M1012 692L985 666M1013 692L1039 666M1132 692L1106 666',
  'M484 374L505 395M1144 374L1132 386M1144 704L1132 692',
];

// [x, y, text, size, rotated]
const LABELS = [
  [505, 390, 'B4/5001', 11],
  [648, 390, 'B4', 11],
  [813, 387, '3202', 8],
  [505, 698, 'B2/5001', 11],
  [648, 698, 'B2', 11],
  [813, 696, '5202', 8],
  [507, 681, 'GLZ-02/001 x 902', 8],
  [688, 681, 'GLZ-02/901 x 902', 8],
  [651, 682, '6', 11],
  [866, 682, '5', 11],
  [580, 545, '6', 11],
  [778, 545, '5', 11],
  [500, 682, 'B1/5001', 10, true],
  [499, 538, '2202', 8, true],
  [489, 621, 'B1', 11],
  [679, 668, 'T1/5102', 10, true],
  [679, 538, '2202', 8, true],
  [669, 616, 'T', 10],
  [893, 670, 'T2/5102', 10, true],
  [893, 538, '2202', 8, true],
  [882, 618, 'T2', 10],
  [910, 450, 'V1/5041', 10, true],
  [910, 538, '2404', 8, true],
  [1003, 450, 'V3/5041', 10, true],
  [1031, 450, 'V1/5041', 10, true],
  [1031, 550, '2404', 8, true],
  [1124, 450, 'V3/5041', 10, true],
  [1124, 538, '2404', 8, true],
  [1139, 538, '2202', 8, true],
  [1139, 682, 'B3/5001', 10, true],
  [1127, 621, 'B3', 11],
  [946, 403, 'V2/5041', 10],
  [1067, 403, 'V2/5041', 10],
  [899, 474, 'V1', 11],
  [991, 474, 'V3MV1', 11],
  [1113, 474, 'V3', 11],
  [934, 545, '7,27001', 11],
  [1055, 545, '7,17001', 11],
  [920, 663, 'GLZ-01/231 x 8', 8],
  [1041, 663, 'GLZ-01/231 x 8', 8],
  [963, 664, '5301', 10],
  [1084, 664, '5301', 10],
  [943, 680, 'A1/2398', 8],
  [1055, 680, 'A1/2398', 8],
  [946, 685, 'V4/5041', 9],
  [1067, 685, 'V4/5041', 9],
  [975, 698, 'A1', 11],
  [1095, 698, 'A1', 11],
];

const MARKS = [
  [821, 357, 0], [959, 367, 0], [1080, 367, 0], [821, 663, 0], [959, 645, 0], [1080, 645, 0],
  [807, 721, 180], [945, 711, 180], [1066, 711, 180], [807, 414, 180], [945, 434, 180], [1066, 434, 180],
  [525, 546, 90], [709, 546, 90], [638, 532, -90], [853, 532, -90], [965, 532, -90], [1086, 532, -90], [940, 546, 90], [1060, 546, 90], [869, 532, -90], [1105, 532, -90],
];

const Drawing = () => (
  <svg viewBox="444 150 740 592" className="block w-full" fontFamily="Liberation Sans, sans-serif" role="img" aria-label="Tekening 00002">
    <defs>
      <pattern id="hatch" width="8" height="8" patternUnits="userSpaceOnUse">
        <path d={HATCH} fill="#000" shapeRendering="crispEdges" />
      </pattern>
    </defs>
    <path d={box(484, 374, 1145, 705)} fill="#c0c0c0" />
    {PANES.map(([a, b, c, d]) => (
      <path key={a} d={box(a, b, c, d)} fill="#00ffff" />
    ))}
    <path d={box(484, 374, 1145, 705)} fill="url(#hatch)" />
    <g transform="translate(.5 .5)" fill="none" stroke="#000" shapeRendering="crispEdges">
      {PANES.map(([a, b, c, d]) => (
        <path key={a} d={box(a, b, c, d)} />
      ))}
      {FRAME_LINES.map((d) => (
        <path key={d} d={d} />
      ))}
      {MITRES.map((d) => (
        <path key={d} d={d} strokeDasharray="1 1" />
      ))}
      <path d="M899 386L1012 540L899 692M1124 393L1012 540L1128 690" stroke="#0000d0" />
      {/* dimension lines */}
      <path d="M470 374V524M470 555V704M465 374H475M465 704H475" />
      <path d="M484 718H643M669 718H852M884 718H889M484 713V723M674 713V723M889 713V723" />
      <path d="M484 732H797M830 732H1144M484 727V737M1144 727V737" />
      <path d="M1158 569V692M1153 692H1163M1153 539H1163M1158 539V544" />
      <path d="M1152 543H1155M1141 374V380M1147 381H1140M481 381H487" />
    </g>
    {[[899, 386], [1020, 386], [892, 686], [1012, 686], [1132, 686], [899, 692], [1020, 692]].map(([x, y]) => (
      <path key={`${x}-${y}`} d={`M${x - 3} ${y + 1}L${x} ${y - 3}L${x + 3} ${y}L${x} ${y + 4}Z`} fill="#0000d0" />
    ))}
    <g fill="#007070" stroke="#003838">
      <path d="M995 542H1001V560L998 568L995 560Z" />
      <circle cx="998" cy="538" r="7" />
    </g>
    <path d="M994 543L998 532L1002 543M996 538H1001" fill="none" stroke="#002828" />
    <circle cx="484" cy="704" r="3" />
    {MARKS.map(([x, y, a]) => (
      <path key={`${x}-${y}`} d="M-4 -1H4M-2 6L0 1L2 6M-1 4H1" fill="none" stroke="#111" transform={`translate(${x} ${y}) rotate(${a})`} />
    ))}
    <path d="M1145 544L1149 546L1145 548" fill="none" stroke="#000" />
    {LABELS.map(([x, y, s, size, rot]) => (
      <text key={`${x}-${y}`} fontSize={size} transform={`translate(${x} ${y}) rotate(${rot ? -90 : 0})`}>
        {s}
      </text>
    ))}
    <g fontSize="11" textAnchor="middle">
      <text x="657" y="722">575</text>
      <text x="868" y="722">1225</text>
      <text x="814" y="736">2000</text>
      <text transform="translate(474 540) rotate(-90)">1000</text>
      <text transform="translate(1162 556) rotate(-90)" fill="#007878">464</text>
    </g>
  </svg>
);

const panel = 'border border-t-white border-l-white border-r-[#a0a0a0] border-b-[#a0a0a0]';

const App = () => (
  <div className="flex min-h-screen flex-col border border-[#8f9857] bg-[#b5bd74] px-[7px] pb-[7px] font-['Open_Sans',sans-serif] text-[11px] text-black">
    {/* Title bar */}
    <header className="relative flex h-[30px] items-center pb-px">
      <svg viewBox="0 0 16 16" width="16" height="16" className="ml-0.5" aria-hidden="true">
        <circle cx="8" cy="8" r="7.5" fill="#3a7fb0" stroke="#9cc4dc" />
        <path d="M2 5Q8 -1 14 5V6H2Z" fill="#cfe4f0" />
        <rect x="4" y="5" width="8" height="7" fill="#0c5f9c" />
        <rect x="6" y="7" width="4" height="3" fill="#d8f0ff" />
      </svg>
      <h1 className="flex-1 pr-[18px] text-center text-[14px] text-[#33361f]">GS_ZENDOW18_SUG2349.jp - JoPPS</h1>
      <div className="absolute right-0 top-0 flex h-5">
        <button type="button" aria-label="Minimaliseren" className="flex w-[26px] items-end justify-center pb-[5px]">
          <span className="h-0.5 w-2 bg-[#222]" />
        </button>
        <button type="button" aria-label="Maximaliseren" className="flex w-7 items-center justify-center">
          <span className="h-2 w-2.5 border border-t-2 border-[#222]" />
        </button>
        <button type="button" aria-label="Sluiten" className="flex w-11 items-center justify-center bg-[#c75050]">
          <svg viewBox="0 0 8 8" width="8" height="8">
            <path d="M.5 .5L7.5 7.5M7.5 .5L.5 7.5" stroke="#fff" strokeWidth="1.6" />
          </svg>
        </button>
      </div>
    </header>

    <main className="flex flex-1 flex-col bg-[#efefef]">
      <nav className="flex h-[19px] items-center gap-[15px] border-b border-[#e4e4e4] bg-[#f5f6f7] pl-[7px] pt-0.5">
        {MENU.map((m) => (
          <button key={m} type="button" className="whitespace-nowrap">
            {m}
          </button>
        ))}
      </nav>

      <div className="mt-0.5 flex h-8 items-center">
        <Grip />
        <div className="ml-[3px] mr-0.5 flex h-full flex-1 items-center bg-linear-to-b from-white to-[#d6d6d6] pb-1">
          <ToolBar items={MAIN_BAR} />
        </div>
      </div>

      {/* Tabs */}
      <div role="tablist" className="mt-[3px] flex h-5 items-end pl-0.5 font-['Liberation_Sans',sans-serif]">
        <button role="tab" type="button" className="h-[18px] w-[44px] border border-b-0 border-[#a0a0a0] text-[11px]">Project</button>
        <button role="tab" type="button" aria-selected="true" className="relative z-10 -mb-px h-[21px] w-[45px] border border-b-0 border-[#a0a0a0] bg-white pb-0.5 text-[11px]">Editor</button>
        <button role="tab" type="button" className="h-[18px] w-[54px] border border-b-0 border-[#a0a0a0] text-[11px]">Resultaat</button>
      </div>

      <div className="border border-[#a0a0a0] bg-white p-[3px]">
        <div className="flex gap-1.5 bg-[#efefef] pl-[5px] pr-[5px] pt-[7px]">
          {/* Tools and properties */}
          <section className="w-[417px] shrink-0">
            <div className={`${panel} pb-1`}>
              <div className="relative mx-0.5 mt-0.5 flex h-[29px] items-center border-r border-t border-[#dcdcdc] pb-1 pl-0.5">
                Spiegelen kader(s) / vleugel(s)
                <svg viewBox="0 0 190 42" width="190" height="42" className="pointer-events-none absolute -left-3 -top-2 z-10 drop-shadow-[2px_3px_2px_rgba(0,0,0,0.45)]">
                  <ellipse cx="93" cy="19" rx="91" ry="15" fill="none" stroke="#d41414" strokeWidth="3" />
                </svg>
              </div>
              <div className="grid grid-cols-[repeat(12,34px)] pl-[5px]">
                {GRID.map(([base, tool], i) => (
                  <button
                    key={i}
                    type="button"
                    aria-label={`Gereedschap ${i + 1}`}
                    className="relative h-[34px] border-2 border-b-[#787878] border-l-white border-r-[#787878] border-t-white bg-[#efefef] p-px"
                  >
                    <svg viewBox="0 0 28 28" width="28" height="28" className="bg-[#c0c0c0]" aria-hidden="true">
                      <Shapes list={base} />
                      <Shapes list={TOOLS[tool]} />
                    </svg>
                    {i === 129 && (
                      <span className="pointer-events-none absolute -left-2 -top-2 z-10 h-[45px] w-[45px] rounded-full border-[3px] border-[#d41414] shadow-[2px_3px_3px_rgba(0,0,0,0.45)]" />
                    )}
                  </button>
                ))}
              </div>
            </div>

            <div className={`${panel} mt-1 px-0.5 pb-1 pt-0.5`}>
              <div className="relative flex h-6 items-center border border-[#a8acb0] bg-white">
                <i className="ml-[27px] h-[15px] w-[15px] border border-black bg-[#ffff00]" />
                <select aria-label="Deel" className="h-full flex-1 appearance-none bg-transparent pl-[3px] text-[12px] font-bold text-black outline-none">
                  <option>{'Deel <00002><1>'}</option>
                </select>
                <Chevron className="absolute right-1" />
              </div>
              <div className="mt-1.5">
                <PropertyList />
              </div>
              <div className="mt-[3px] flex gap-1.5 pl-0.5">
                <button type="button" aria-label="Toepassen" className="flex h-5 w-[74px] items-center justify-center border border-[#a8a8a8] bg-[#e8e8e8]">
                  <svg viewBox="0 0 12 10" width="12" height="10">
                    <path d="M1 5L4.5 8L11 1.5" fill="none" stroke="#000" strokeWidth="2.4" />
                  </svg>
                </button>
                <button type="button" aria-label="Annuleren" className="flex h-5 w-[74px] items-center justify-center border border-[#a8a8a8] bg-[#e8e8e8]">
                  <svg viewBox="0 0 10 10" width="10" height="10">
                    <path d="M1 1L9 9M9 1L1 9" stroke="#000" strokeWidth="2.2" />
                  </svg>
                </button>
              </div>
            </div>
            <p className="flex h-[29px] items-start pl-3 pt-[3px] text-[12px] font-bold leading-4">1 selectie</p>
          </section>

          {/* Drawing */}
          <section className="min-w-0 flex-1">
            <div className={`${panel} px-0.5`}>
              <div className="flex h-[30px] items-center">
                <Grip />
                <div className="flex h-[28px] flex-1 items-center bg-linear-to-b from-white to-[#d6d6d6]">
                  <ToolBar items={VIEW_BAR} />
                </div>
              </div>
              <div className="border border-[#707070] border-b-[#dcdcdc] border-r-[#dcdcdc] bg-white">
                <Drawing />
              </div>
              <div className="flex h-7 items-center pb-0.5 pt-1">
                <span className="flex h-full w-[128px] items-center border-r border-[#d4d4d4] pl-px">2091 x 1667</span>
                <span className="h-full w-[129px] border-r border-[#d4d4d4]" />
                <span className="flex h-full items-center gap-0.5 pl-0.5">
                  <Glyph list={win()} />
                  {'1x <00002> ... [ZENDOW]'}
                </span>
              </div>
            </div>
          </section>
        </div>
      </div>

      {/* Open files */}
      <div className="mt-[6px] flex h-[27px] items-start border-b border-t border-b-[#d0d0d0] border-t-[#606060] bg-[#f6f6f6] pl-3">
        <button type="button" className="relative -mt-px flex h-[23px] w-[209px] items-center border-b border-[#606060] bg-[#f6f6f6] pl-0.5 font-['Liberation_Sans',sans-serif] text-[13px]">
          <span className="absolute -left-[3px] top-0 h-[22px] w-1.5 skew-x-[14deg] border-l border-[#606060] bg-[#f6f6f6]" />
          <span className="absolute -right-[3px] top-0 h-[22px] w-1.5 -skew-x-[14deg] border-r border-[#606060] bg-[#f6f6f6]" />
          <Glyph
            className="relative"
            list={[f(Y, 'M1 2H13L2 6Z'), l(K, 'M13 2H17V8M17 8L11 12M17 8L19 12'), f('#80d8d8', 'M11 11H19V19H11Z'), l(K, 'M15 11V19M11 15H19')]}
          />
          <span className="relative ml-1.5">GS_ZENDOW18_SUG2349.jp</span>
        </button>
      </div>

      <footer className="flex h-[21px] items-center pt-px">
        <span className="flex h-full w-[164px] items-center border-r border-[#d4d4d4]">
          <Glyph size={17} list={[f(Y, 'M6 2H10L11 4V6L10 8H6L5 6V4Z'), f(Y, 'M2 16V11L5 8H11L14 11V16H11V12V16H5V12V16Z')]} />
          GUNTER
        </span>
        <span className="flex h-full w-[164px] items-center border-r border-[#d4d4d4] pl-1">
          <Glyph size={15} list={[f('#008080', 'M1 2H10V13H3L1 11Z'), n(W, 'M2 2H9V4H2Z'), f('#800080', 'M6 5H12V7H6ZM6 8H12V10H6ZM6 11H12V13H6Z')]} />
          ZENDOW18
        </span>
        <span className="flex h-full w-7 items-center justify-center border-r border-[#d4d4d4]">
          <Glyph size={16} list={[n(K, 'M6 1H10L11 3L9 10H7L5 3ZM6 12L8 11L10 12V14L8 15L6 14Z')]} />
        </span>
        <span className="h-full w-7 border-r border-[#d4d4d4]" />
        <svg viewBox="0 0 10 10" width="10" height="10" className="ml-auto mr-px self-end" aria-hidden="true">
          <path d="M7 1h2v2h-2zM7 4h2v2h-2zM4 4h2v2h-2zM7 7h2v2h-2zM4 7h2v2h-2zM1 7h2v2h-2z" fill="#b8b8c0" />
        </svg>
      </footer>
    </main>
  </div>
);

export default App;
